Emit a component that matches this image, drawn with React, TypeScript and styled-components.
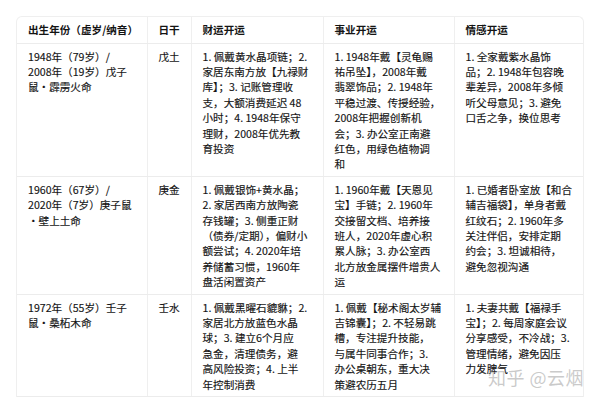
import React from "react";
import styled, { createGlobalStyle } from "styled-components";

const GlobalStyle = createGlobalStyle`
  html, body {
    margin: 0;
    padding: 0;
    background: #ffffff;
    overflow: hidden;
  }
  body {
    font-family: "Noto Sans CJK SC", "Noto Sans", sans-serif;
    color: #141414;
  }
`;

const Page = styled.div`
  position: relative;
  width: 600px;
  height: 400px;
  padding: 16px;
  box-sizing: border-box;
`;

const Frame = styled.div`
  border: 1px solid #efefef;
  border-bottom: none;
  border-radius: 6px 6px 0 0;
  overflow: hidden;
`;

const Table = styled.table`
  width: 567px;
  border-collapse: collapse;
  table-layout: fixed;
`;

const HeadCell = styled.th<{ w: number }>`
  width: ${props => props.w}px;
  height: 26px;
  padding: 0 11px;
  box-sizing: border-box;
  text-align: left;
  font-size: 10.6px;
  font-weight: 700;
  color: #141414;
  border-bottom: 1px solid #ececec;
  border-left: 1px solid #efefef;
  white-space: nowrap;
  &:first-child {
    border-left: none;
  }
`;

const Cell = styled.td`
  vertical-align: top;
  padding: 5px 11px 4px 11px;
  font-size: 10.6px;
  line-height: 15.4px;
  color: #141414;
  -webkit-text-stroke: 0.15px #141414;
  border-bottom: 1px solid #ececec;
  border-left: 1px solid #efefef;
  &:first-child {
    border-left: none;
  }
`;

const Line = styled.div`
  white-space: nowrap;
`;

const Watermark = styled.div`
  position: absolute;
  right: 16px;
  bottom: 10px;
  font-size: 18px;
  letter-spacing: 0.5px;
  color: rgba(150, 150, 150, 0.5);
  font-family: "Noto Sans CJK SC", "Noto Sans", sans-serif;
`;

const columns = [
  { title: "出生年份（虚岁/纳音）", w: 130 },
  { title: "日干", w: 44 },
  { title: "财运开运", w: 132 },
  { title: "事业开运", w: 131 },
  { title: "情感开运", w: 130 },
];

const rows: string[][][] = [
  [
    ["1948年（79岁）/", "2008年（19岁）戊子", "鼠·霹雳火命"],
    ["戊土"],
    [
      "1. 佩戴黄水晶项链；2.",
      "家居东南方放【九禄财",
      "库】；3. 记账管理收",
      "支，大额消费延迟 48",
      "小时；4. 1948年保守",
      "理财，2008年优先教",
      "育投资",
    ],
    [
      "1. 1948年戴【灵龟赐",
      "祐吊坠】，2008年戴",
      "翡翠饰品；2. 1948年",
      "平稳过渡、传授经验，",
      "2008年把握创新机",
      "会；3. 办公室正南避",
      "红色，用绿色植物调",
      "和",
    ],
    [
      "1. 全家戴紫水晶饰",
      "品；2. 1948年包容晚",
      "辈差异，2008年多倾",
      "听父母意见；3. 避免",
      "口舌之争，换位思考",
    ],
  ],
  [
    ["1960年（67岁）/", "2020年（7岁）庚子鼠", "·壁上土命"],
    ["庚金"],
    [
      "1. 佩戴银饰+黄水晶；",
      "2. 家居西南方放陶瓷",
      "存钱罐；3. 侧重正财",
      "（债券/定期），偏财小",
      "额尝试；4. 2020年培",
      "养储蓄习惯，1960年",
      "盘活闲置资产",
    ],
    [
      "1. 1960年戴【天恩见",
      "宝】手链；2. 1960年",
      "交接留文档、培养接",
      "班人，2020年虚心积",
      "累人脉；3. 办公室西",
      "北方放金属摆件增贵人",
      "运",
    ],
    [
      "1. 已婚者卧室放【和合",
      "辅吉福袋】，单身者戴",
      "红纹石；2. 1960年多",
      "关注伴侣，安排定期",
      "约会；3. 坦诚相待，",
      "避免忽视沟通",
    ],
  ],
  [
    ["1972年（55岁）壬子", "鼠·桑柘木命"],
    ["壬水"],
    [
      "1. 佩戴黑曜石貔貅；2.",
      "家居北方放蓝色水晶",
      "球；3. 建立6个月应",
      "急金，清理债务，避",
      "高风险投资；4. 上半",
      "年控制消费",
    ],
    [
      "1. 佩戴【秘术阁太岁辅",
      "吉锦囊】；2. 不轻易跳",
      "槽，专注提升技能，",
      "与属牛同事合作；3.",
      "办公桌朝东，重大决",
      "策避农历五月",
    ],
    [
      "1. 夫妻共戴【福禄手",
      "宝】；2. 每周家庭会议",
      "分享感受，不冷战；3.",
      "管理情绪，避免因压",
      "力发脾气",
    ],
  ],
];

export default function App() {
  return (
    <Page>
      <GlobalStyle />
      <Frame>
        <Table>
          <thead>
            <tr>
              {columns.map(col => (
                <HeadCell key={col.title} w={col.w}>
                  {col.title}
                </HeadCell>
              ))}
            </tr>
          </thead>
          <tbody>
            {rows.map((row, i) => (
              <tr key={i}>
                {row.map((cell, j) => (
                  <Cell key={j}>
                    {cell.map(line => (
                      <Line key={line}>{line}</Line>
                    ))}
                  </Cell>
                ))}
              </tr>
            ))}
          </tbody>
        </Table>
      </Frame>
      <Watermark>知乎 @云烟</Watermark>
    </Page>
  );
}
